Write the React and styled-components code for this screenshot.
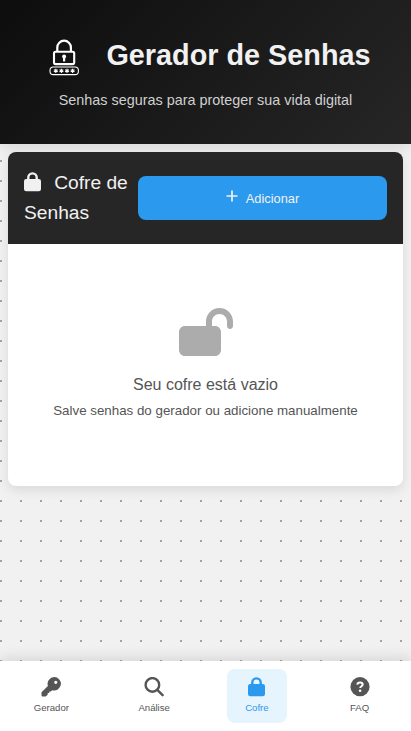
import styled, { createGlobalStyle } from 'styled-components';
import { FaLockOpen } from 'react-icons/fa6';

const GlobalStyle = createGlobalStyle`
  * {
    box-sizing: border-box;
    margin: 0;
    padding: 0;
  }

  body {
    font-family: 'Liberation Sans', Arial, sans-serif;
    background-color: #f1f1f1;
    color: #555;
    overflow: hidden;
  }
`;

const Container = styled.div`
  display: flex;
  flex-direction: column;
  height: 100vh;
  background-color: #f1f1f1;
  background-image: radial-gradient(circle at 1px 1px, #a3a3a3 1px, transparent 0);
  background-size: 20px 20px;
`;

const Header = styled.header`
  height: 144px;
  padding-top: 32px;
  text-align: center;
  background: linear-gradient(135deg, #0d0d0d 0%, #262626 100%);
  box-shadow: 0 4px 12px rgba(0, 0, 0, 0.1);
`;

const Brand = styled.div`
  display: flex;
  align-items: center;
  justify-content: center;
  height: 46px;
`;

const Logo = styled.svg`
  width: 48px;
  height: 48px;
  margin: 4px 18px 0 0;
`;

const Title = styled.h1`
  font-size: 28.8px;
  line-height: 46px;
  color: #f1f1f1;
`;

const Subtitle = styled.p`
  margin-top: 11px;
  font-size: 14.4px;
  line-height: 23px;
  color: #d0d0d0;
`;

const Main = styled.main`
  flex: 1;
  padding: 8px;
`;

const Card = styled.section`
  height: 334px;
  border-radius: 8px;
  background: #fff;
  overflow: hidden;
  box-shadow: 0 4px 12px rgba(0, 0, 0, 0.1);
`;

const CardHeader = styled.div`
  display: flex;
  align-items: center;
  height: 92px;
  padding: 0 16px;
  background: #262626;
`;

const CardTitle = styled.h2`
  width: 114px;
  font-size: 19.2px;
  font-weight: 400;
  line-height: 30px;
  color: #f1f1f1;

  svg {
    margin-right: 7.8px;
    vertical-align: -2.5px;
  }
`;

const AddButton = styled.button`
  display: flex;
  flex: 1;
  align-items: center;
  justify-content: center;
  gap: 8px;
  height: 44px;
  border: none;
  border-radius: 8px;
  background: #2b99ee;
  color: #f1f1f1;
  font-family: inherit;
  font-size: 12.8px;

  svg {
    margin-bottom: 4px;
  }
`;

const Empty = styled.div`
  display: flex;
  flex-direction: column;
  align-items: center;
  padding-top: 64px;
`;

const EmptyIcon = styled(FaLockOpen)`
  width: 54px;
  height: 48px;
  color: #acacac;
`;

const EmptyTitle = styled.p`
  margin-top: 16px;
  font-size: 16px;
  line-height: 26px;
`;

const EmptyText = styled.p`
  margin-top: 2px;
  font-size: 13.333px;
  line-height: 22px;
`;

const Nav = styled.nav`
  display: flex;
  justify-content: space-around;
  height: 70px;
  padding: 8px 0;
  background: #fff;
  box-shadow: 0 -4px 12px rgba(0, 0, 0, 0.1);
`;

const NavItem = styled.button`
  display: flex;
  flex-direction: column;
  align-items: center;
  width: 60px;
  height: 54px;
  padding-top: 8px;
  border: none;
  border-radius: 8px;
  background: ${({ $active }) => ($active ? '#e6f4fd' : 'transparent')};
  color: ${({ $active }) => ($active ? '#2b99ee' : '#555')};
  font-family: inherit;
  font-size: 9.6px;
  line-height: 15px;

  svg {
    margin-bottom: 3px;
  }
`;

const LockIcon = () => (
  <svg width="17" height="20" viewBox="0 0 17 20">
    <rect x="0" y="7.1" width="17" height="12.2" rx="2.2" fill="currentColor" />
    <path
      d="M4.3 8.5V5.6a4.2 4.2 0 0 1 8.4 0v2.9"
      fill="none"
      stroke="currentColor"
      strokeWidth="2.4"
    />
  </svg>
);

const KeyIcon = () => (
  <svg width="20" height="20" viewBox="0 0 20 20" fill="currentColor">
    <path
      fillRule="evenodd"
      d="M13.2.1a6.7 6.7 0 1 1-2 13.1l-1.3 1.3H8.3v1.6H6.7v1.6L5.2 19.1q-.3.3-.7.3H1.5q-1 0-1-1v-2.6q0-.4.3-.7l6.1-6.2A6.7 6.7 0 0 1 13.2.1ZM14.8 3.7a1.6 1.6 0 1 0 0 3.2a1.6 1.6 0 0 0 0-3.2Z"
    />
  </svg>
);

const SearchIcon = () => (
  <svg
    width="20"
    height="20"
    viewBox="0 0 20 20"
    fill="none"
    stroke="currentColor"
    strokeWidth="2.4"
    strokeLinecap="round"
  >
    <circle cx="8.4" cy="7.9" r="6.8" />
    <path d="m13.3 12.9 5.3 5.3" />
  </svg>
);

const PlusIcon = () => (
  <svg
    width="12"
    height="12"
    viewBox="0 0 12 12"
    fill="none"
    stroke="currentColor"
    strokeWidth="1.7"
  >
    <path d="M6 .5v11M.5 6h11" />
  </svg>
);

const QuestionIcon = () => (
  <svg width="20" height="20" viewBox="0 0 20 20">
    <circle cx="10" cy="9.7" r="9.6" fill="currentColor" />
    <path
      d="M7.3 7.6c.2-1.4 1.3-2 2.7-2 1.5 0 2.7.7 2.7 2 0 1.7-2.5 1.6-2.5 3.5"
      fill="none"
      stroke="#fff"
      strokeWidth="2"
    />
    <circle cx="10.1" cy="13.8" r="1.3" fill="#fff" />
  </svg>
);

const stars = [15.8, 21.4, 27, 32.6];

const LogoIcon = () => (
  <Logo viewBox="0 0 48 48" fill="none" stroke="#fff">
    <path d="M17.3 18.2v-3.7a6.8 6.8 0 0 1 13.6 0v3.7" strokeWidth="2.2" />
    <rect x="14" y="18.7" width="20.2" height="12.4" rx="1.5" strokeWidth="2.1" />
    <circle cx="24.1" cy="23.5" r="2" fill="#fff" stroke="none" />
    <path d="M24.1 23.5v4.9" strokeWidth="2.2" />
    <rect x="10" y="34" width="28.4" height="7.6" rx="3.4" strokeWidth="1.1" />
    {stars.map((x) => (
      <path
        key={x}
        d={`M${x} 35.7v4.2m-1.9-3.1 3.8 2m-3.8 0 3.8-2`}
        strokeWidth="1.1"
      />
    ))}
  </Logo>
);

const navItems = [
  { label: 'Gerador', icon: KeyIcon },
  { label: 'Análise', icon: SearchIcon },
  { label: 'Cofre', icon: LockIcon, active: true },
  { label: 'FAQ', icon: QuestionIcon },
];

const App = () => {
  return (
    <>
      <GlobalStyle />
      <Container>
        <Header>
          <Brand>
            <LogoIcon />
            <Title>Gerador de Senhas</Title>
          </Brand>
          <Subtitle>Senhas seguras para proteger sua vida digital</Subtitle>
        </Header>
        <Main>
          <Card>
            <CardHeader>
              <CardTitle>
                <LockIcon /> Cofre de Senhas
              </CardTitle>
              <AddButton>
                <PlusIcon />
                Adicionar
              </AddButton>
            </CardHeader>
            <Empty>
              <EmptyIcon />
              <EmptyTitle>Seu cofre está vazio</EmptyTitle>
              <EmptyText>
                Salve senhas do gerador ou adicione manualmente
              </EmptyText>
            </Empty>
          </Card>
        </Main>
        <Nav>
          {navItems.map(({ label, icon: Icon, active }) => (
            <NavItem key={label} $active={active}>
              <Icon />
              {label}
            </NavItem>
          ))}
        </Nav>
      </Container>
    </>
  );
};

export default App;
